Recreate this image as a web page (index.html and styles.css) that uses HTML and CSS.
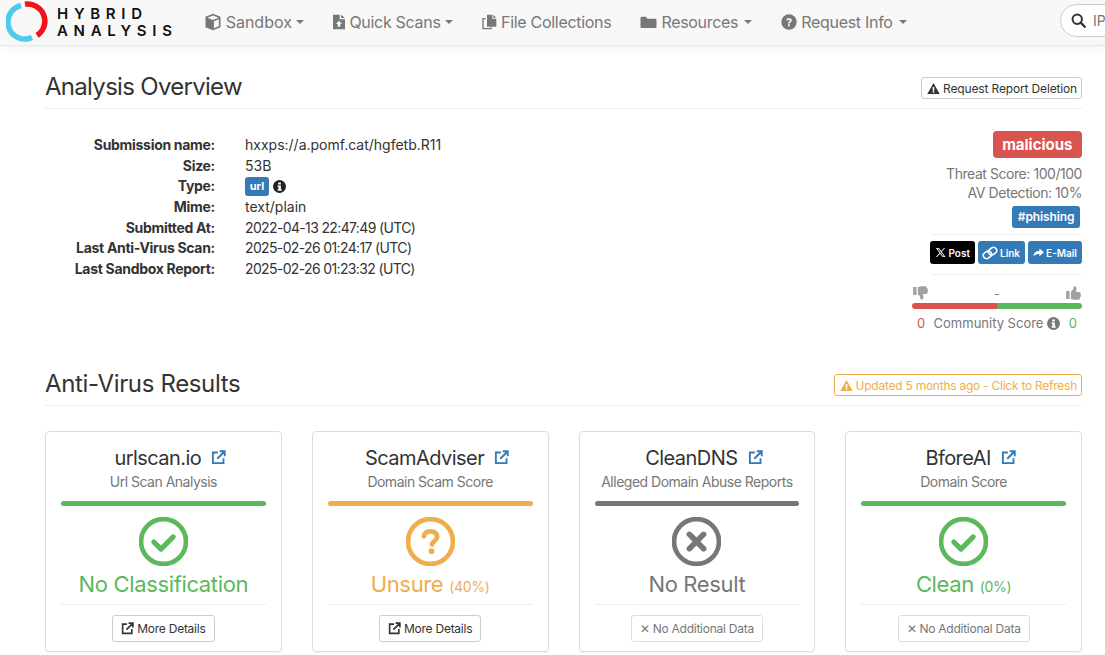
FILE: index.html
```html
<!DOCTYPE html>
<html lang="en">
<head>
    <meta charset="UTF-8">
    <meta name="viewport" content="width=device-width, initial-scale=1.0">
    <title>Analysis Overview</title>
    <link rel="stylesheet" href="styles.css">
</head>
<body>

    <nav class="navbar">
        <a class="brand" href="#">
            <svg class="brand-mark" viewBox="0 0 44 44">
                <path d="M15 5.500A17 17 0 1 0 26 37.500" fill="none" stroke="#4ccbea" stroke-width="5.500"/>
                <path d="M19 4.300A17 17 0 0 1 31 35.400" fill="none" stroke="#f01418" stroke-width="5.500"/>
            </svg>
            <span class="brand-text">HYBRID<br>ANALYSIS</span>
        </a>
        <ul class="nav-menu">
            <li class="nav-sandbox">
                <svg class="nav-icon nav-icon-box" viewBox="0 0 24 24"><path d="M12 1 22 5v14l-10 4-10-4V5zM4.600 6.200 12 9.200l7.400-3L12 3.400zM13.200 11v9.200l6.600-2.700V8.400z" fill-rule="evenodd"/></svg>
                Sandbox <i class="caret"></i>
            </li>
            <li class="nav-scans">
                <svg class="nav-icon nav-icon-file" viewBox="0 0 18 24"><path d="M0 1h10v7h8v15H0zM12 1l6 5h-6zM9 10l-4.500 5H7v4h4v-4h2.500z" fill-rule="evenodd"/></svg>
                Quick Scans <i class="caret"></i>
            </li>
            <li class="nav-files">
                <svg class="nav-icon" viewBox="0 0 24 24"><path d="M9 1h8v6h6v12H9zM18.500 1 23 5.500h-4.500zM2 6h5v2H4v13h10v-1h2v3H2z"/></svg>
                File Collections
            </li>
            <li class="nav-resources">
                <svg class="nav-icon nav-icon-wide" viewBox="0 0 24 24"><path d="M0 6a2 2 0 0 1 2-2h6l2.500 3H22a2 2 0 0 1 2 2v10a2 2 0 0 1-2 2H2a2 2 0 0 1-2-2z"/></svg>
                Resources <i class="caret caret-far"></i>
            </li>
            <li class="nav-info">
                <svg class="nav-icon" viewBox="0 0 24 24"><circle cx="12" cy="12" r="11.500"/><path d="M8 9.500C8.300 7 10 6 12.200 6c2.400 0 4 1.400 4 3.400 0 2.900-3 2.900-3 4.800h-2.700c0-3 3-3.300 3-4.700 0-.8-.6-1.200-1.400-1.200-.9 0-1.400.5-1.600 1.500zM10.500 15.500h2.700v2.700h-2.700z" fill="#f8f8f8"/></svg>
                Request Info <i class="caret caret-far"></i>
            </li>
        </ul>
        <div class="nav-search">
            <svg class="search-icon" viewBox="0 0 24 24"><circle cx="10" cy="10" r="7.500" fill="none" stroke="#333" stroke-width="3.200"/><path d="m15.500 15.500 6.500 6.500" stroke="#333" stroke-width="3.800" stroke-linecap="round"/></svg>
            <span>IP, Domain, Hash...</span>
        </div>
    </nav>

    <main class="container">
        <div class="page-header">
            <h2>Analysis Overview</h2>
            <a class="btn btn-default" href="#">
                <svg class="btn-icon" viewBox="0 0 24 24"><path d="M12 2 23.500 22H.5zM10.500 9v7h3V9zM10.500 17.200v2.600h3v-2.600z" fill-rule="evenodd"/></svg>
                Request Report Deletion
            </a>
        </div>

        <section class="overview">
            <dl class="details">
                <dt>Submission name:</dt><dd>hxxps://a.pomf.cat/hgfetb.R11</dd>
                <dt>Size:</dt><dd>53B</dd>
                <dt>Type:</dt>
                <dd><span class="label-url">url</span>
                    <svg class="type-info" viewBox="0 0 24 24"><circle cx="12" cy="12" r="12" fill="#222"/><path d="M9.500 4.500h5v3.600h-5zM8.500 10h6v7h1.500v3H8.500v-3H10v-4H8.500z" fill="#fff"/></svg>
                </dd>
                <dt>Mime:</dt><dd>text/plain</dd>
                <dt>Submitted At:</dt><dd class="date">2022-04-13 22:47:49 (UTC)</dd>
                <dt>Last Anti-Virus Scan:</dt><dd class="date">2025-02-26 01:24:17 (UTC)</dd>
                <dt>Last Sandbox Report:</dt><dd class="date">2025-02-26 01:23:32 (UTC)</dd>
            </dl>

            <aside class="verdict">
                <span class="verdict-badge">malicious</span>
                <div class="score-line">Threat Score: 100/100</div>
                <div class="score-line">AV Detection: 10%</div>
                <span class="tag">#phishing</span>
                <hr class="verdict-rule rule-top">
                <div class="share">
                    <a class="share-btn share-x" href="#">
                        <svg viewBox="0 0 24 24"><path d="M2 2h6.500l5 6.800L19.500 2H22l-7.400 8.400L23 22h-6.500l-5.500-7.400L4.500 22H2l7.900-9zM5.500 3.800 17.500 20.200h2L7.500 3.800z" fill-rule="evenodd"/></svg>
                        Post
                    </a>
                    <a class="share-btn" href="#">
                        <svg class="link-icon" viewBox="0 0 28 24"><g fill="none" stroke="#fff" stroke-width="2.800" transform="rotate(-35 14 12)"><rect x="1" y="6.500" width="15" height="11" rx="5.500"/><rect x="12" y="6.500" width="15" height="11" rx="5.500"/></g></svg>Link
                    </a>
                    <a class="share-btn" href="#">
                        <svg viewBox="0 0 24 24"><path d="M14 3l10 8.500L14 20v-5C8 15 4 16.500 1 21c0-7 4-12.500 13-13z"/></svg>
                        E-Mail
                    </a>
                </div>
                <hr class="verdict-rule rule-bottom">
                <div class="votes">
                    <svg class="thumb" viewBox="0 0 24 24"><path d="M1 3h5v12H1zM8 3.500C10 2.500 12 2 15 2h4c1.500 0 2.500 1 2.500 2.300 1 .7 1.500 2 1 3 .8.900.9 2.300.2 3.200.3 1.700-.7 3-2.700 3h-4.500c.5 2 1 3 1 4.500 0 2.500-1.500 4-3 4-1 0-1.500-.5-1.500-1.500 0-3-2-5-4-6.500z"/></svg>
                    <span class="vote-dash">-</span>
                    <svg class="thumb" viewBox="0 0 24 24"><path d="M1 9h5v12H1zM8 20.500c2 1 4 1.500 7 1.500h4c1.500 0 2.500-1 2.500-2.300 1-.7 1.500-2 1-3 .8-.9.9-2.300.2-3.200.3-1.700-.7-3-2.700-3h-4.500c.5-2 1-3 1-4.500 0-2.500-1.500-4-3-4-1 0-1.500.5-1.500 1.500 0 3-2 5-4 6.500z"/></svg>
                </div>
                <div class="vote-bar"><span class="vote-down"></span><span class="vote-up"></span></div>
                <div class="community">
                    <span class="count-bad">0</span>
                    <span class="community-label">Community Score
                        <svg class="community-info" viewBox="0 0 24 24"><circle cx="12" cy="12" r="12" fill="#777"/><path d="M9.500 4.500h5v3.600h-5zM8.500 10h6v7h1.500v3H8.500v-3H10v-4H8.500z" fill="#fff"/></svg>
                    </span>
                    <span class="count-good">0</span>
                </div>
            </aside>
        </section>

        <div class="page-header header-av">
            <h2>Anti-Virus Results</h2>
            <a class="btn btn-warning" href="#">
                <svg class="btn-icon" viewBox="0 0 24 24"><path d="M12 2 23.500 22H.5zM10.500 9v7h3V9zM10.500 17.200v2.600h3v-2.600z" fill-rule="evenodd"/></svg>
                Updated 5 months ago - Click to Refresh
            </a>
        </div>

        <section class="cards">
            <article class="card success">
                <h3>urlscan.io <svg class="ext" viewBox="0 0 24 24"><path d="M11 4H3v17h17v-8M14 2h8v8M22 2 10 14" fill="none" stroke="currentColor" stroke-width="3"/></svg></h3>
                <p class="card-sub">Url Scan Analysis</p>
                <div class="card-bar"></div>
                <svg class="status-icon" viewBox="0 0 48 48"><circle cx="24" cy="24" r="22" fill="none" stroke="currentColor" stroke-width="4.600"/><path d="m14.500 24.500 7 7 12-12" fill="none" stroke="currentColor" stroke-width="5" stroke-linecap="round" stroke-linejoin="round"/></svg>
                <div class="status">No Classification</div>
                <hr class="card-rule">
                <a class="btn btn-details" href="#">
                    <svg class="ext-small" viewBox="0 0 24 24"><path d="M11 4H3v17h17v-8M14 2h8v8M22 2 10 14" fill="none" stroke="currentColor" stroke-width="3"/></svg>
                    More Details
                </a>
            </article>

            <article class="card warning">
                <h3>ScamAdviser <svg class="ext" viewBox="0 0 24 24"><path d="M11 4H3v17h17v-8M14 2h8v8M22 2 10 14" fill="none" stroke="currentColor" stroke-width="3"/></svg></h3>
                <p class="card-sub">Domain Scam Score</p>
                <div class="card-bar"></div>
                <svg class="status-icon" viewBox="0 0 48 48"><circle cx="24" cy="24" r="22" fill="none" stroke="currentColor" stroke-width="4.600"/><path d="M17.500 19c.5-3.500 3.200-5 6.500-5 3.800 0 6.500 2 6.500 5.200 0 4.300-5 4.300-5 7.800" fill="none" stroke="currentColor" stroke-width="4.600" stroke-linecap="round"/><circle cx="25" cy="33.500" r="2.800" fill="currentColor"/></svg>
                <div class="status">Unsure <small>(40%)</small></div>
                <hr class="card-rule">
                <a class="btn btn-details" href="#">
                    <svg class="ext-small" viewBox="0 0 24 24"><path d="M11 4H3v17h17v-8M14 2h8v8M22 2 10 14" fill="none" stroke="currentColor" stroke-width="3"/></svg>
                    More Details
                </a>
            </article>

            <article class="card neutral">
                <h3>CleanDNS <svg class="ext" viewBox="0 0 24 24"><path d="M11 4H3v17h17v-8M14 2h8v8M22 2 10 14" fill="none" stroke="currentColor" stroke-width="3"/></svg></h3>
                <p class="card-sub">Alleged Domain Abuse Reports</p>
                <div class="card-bar"></div>
                <svg class="status-icon" viewBox="0 0 48 48"><circle cx="24" cy="24" r="22" fill="none" stroke="currentColor" stroke-width="4.600"/><path d="m17 17 14 14M31 17 17 31" fill="none" stroke="currentColor" stroke-width="5.500" stroke-linecap="round"/></svg>
                <div class="status">No Result</div>
                <hr class="card-rule">
                <a class="btn btn-nodata" href="#">&#10005; No Additional Data</a>
            </article>

            <article class="card success">
                <h3>BforeAI <svg class="ext" viewBox="0 0 24 24"><path d="M11 4H3v17h17v-8M14 2h8v8M22 2 10 14" fill="none" stroke="currentColor" stroke-width="3"/></svg></h3>
                <p class="card-sub">Domain Score</p>
                <div class="card-bar"></div>
                <svg class="status-icon" viewBox="0 0 48 48"><circle cx="24" cy="24" r="22" fill="none" stroke="currentColor" stroke-width="4.600"/><path d="m14.500 24.500 7 7 12-12" fill="none" stroke="currentColor" stroke-width="5" stroke-linecap="round" stroke-linejoin="round"/></svg>
                <div class="status">Clean <small>(0%)</small></div>
                <hr class="card-rule">
                <a class="btn btn-nodata" href="#">&#10005; No Additional Data</a>
            </article>
        </section>
    </main>

</body>
</html>
```

FILE: styles.css
```css
* {
    box-sizing: border-box;
}

html, body {
    height: 655px;
    overflow: hidden;
}

body {
    margin: 0;
    font-family: Inter, "Noto Sans", sans-serif;
    font-size: 14px;
    color: #333;
    background-color: #fff;
}

a {
    text-decoration: none;
}

/* navbar */
.navbar {
    display: flex;
    align-items: center;
    height: 46px;
    padding-bottom: 1px;
    background-color: #f8f8f8;
    border-bottom: 1px solid #e7e7e7;
    box-shadow: 0 3px 8px rgba(0, 0, 0, 0.05);
    overflow: hidden;
}

.brand {
    display: flex;
    align-items: center;
    gap: 7px;
    margin-left: 6px;
    color: #111;
}

.brand-mark {
    width: 44px;
    height: 44px;
}

.brand-text {
    font-size: 15px;
    font-weight: 600;
    line-height: 17px;
    letter-spacing: 5.7px;
}

.nav-menu {
    display: flex;
    align-items: center;
    list-style: none;
    margin: 0 0 0 26px;
    padding: 0;
    font-size: 16px;
    letter-spacing: -0.3px;
    color: #777;
}

.nav-menu li {
    display: flex;
    align-items: center;
    gap: 4px;
    margin-right: 29px;
    white-space: nowrap;
}

.nav-menu .nav-sandbox {
    letter-spacing: 0;
}

.nav-menu .nav-scans {
    gap: 4.5px;
    margin-right: 28px;
}

.nav-menu .nav-info {
    margin-right: 0;
}

.nav-icon {
    width: 16px;
    height: 16px;
    fill: #777;
}

.nav-icon-box {
    width: 18px;
    height: 18px;
}

.nav-icon-file {
    width: 12px;
}

.nav-icon-wide {
    width: 17px;
}

.caret {
    width: 0;
    height: 0;
    border-top: 4px solid #777;
    border-left: 4px solid transparent;
    border-right: 4px solid transparent;
}

.caret-far {
    margin-left: 2px;
}

.nav-search {
    display: flex;
    align-items: center;
    gap: 7px;
    flex: none;
    width: 200px;
    height: 33px;
    margin: 0 -155px 4px auto;
    padding-left: 10px;
    font-size: 14px;
    color: #777;
    background-color: #fff;
    border: 1px solid #ccc;
    border-radius: 17px;
    white-space: nowrap;
}

.search-icon {
    width: 15px;
    height: 15px;
}

/* page sections */
.container {
    padding: 0 23px 0 45px;
}

.page-header {
    display: flex;
    justify-content: space-between;
    align-items: center;
    height: 63px;
    padding-top: 19px;
    border-bottom: 1px solid #eee;
}

.page-header h2 {
    margin: 0;
    font-size: 24px;
    font-weight: 400;
    letter-spacing: -0.7px;
}

.header-av h2 {
    letter-spacing: -0.35px;
}

.btn {
    display: inline-flex;
    align-items: center;
    gap: 3px;
    font-size: 12px;
    letter-spacing: -0.15px;
    border-radius: 3px;
    white-space: nowrap;
}

.btn-default {
    height: 22px;
    margin-top: 3px;
    padding: 0 4px 0 5px;
    color: #333;
    border: 1px solid #ccc;
}

.btn-warning {
    height: 22px;
    margin-top: 3px;
    padding: 0 4px 0 5px;
    letter-spacing: -0.25px;
    color: #f0ad4e;
    border: 1px solid #f0ad4e;
}

.btn-icon {
    width: 13px;
    height: 13px;
    fill: currentColor;
}

/* overview */
.overview {
    display: flex;
    justify-content: space-between;
    height: 234px;
}

.details {
    display: grid;
    grid-template-columns: 170px auto;
    grid-auto-rows: 20.6px;
    column-gap: 30px;
    align-content: start;
    margin: 26.3px 0 0;
    line-height: 20.6px;
}

.details dt {
    font-weight: 700;
    text-align: right;
    letter-spacing: -0.3px;
}

.details dd {
    display: flex;
    align-items: center;
    gap: 4px;
    margin: 0;
}

.details .date {
    letter-spacing: -0.64px;
}

.label-url {
    width: 24px;
    font-size: 11px;
    font-weight: 700;
    line-height: 19px;
    text-align: center;
    color: #fff;
    background-color: #337ab7;
    border-radius: 3px;
}

.type-info {
    width: 13px;
    height: 13px;
}

.verdict {
    display: flex;
    flex-direction: column;
    align-items: flex-end;
    width: 170px;
    padding-top: 22px;
}

.verdict-badge {
    padding: 0 9.5px;
    font-size: 15px;
    font-weight: 700;
    line-height: 27px;
    color: #fff;
    background-color: #d9534f;
    border-radius: 4px;
}

.score-line {
    font-size: 14px;
    letter-spacing: -0.45px;
    line-height: 19px;
    color: #777;
}

.verdict-badge + .score-line {
    margin-top: 6px;
}

.tag {
    margin: 4px 2px 0 0;
    padding: 0 5.5px;
    font-size: 12px;
    font-weight: 600;
    letter-spacing: -0.1px;
    line-height: 22px;
    color: #fff;
    background-color: #337ab7;
    border-radius: 3px;
}

.verdict-rule {
    width: 150px;
    margin: 0 0 0 auto;
    border: 0;
    border-top: 1px solid #eee;
}

.rule-top {
    margin-top: 6px;
}

.rule-bottom {
    margin-top: 10px;
}

.share {
    display: flex;
    gap: 3px;
    margin-top: 6px;
}

.share-btn {
    display: flex;
    align-items: center;
    gap: 2px;
    height: 23px;
    padding: 0 5px;
    font-size: 10px;
    font-weight: 600;
    color: #fff;
    background-color: #337ab7;
    border-radius: 3px;
}

.share-btn svg {
    width: 11px;
    height: 11px;
    fill: #fff;
}

.share-btn .link-icon {
    width: 16px;
    height: 14px;
    margin-left: -1px;
}

.share-x {
    background-color: #000;
}

.votes {
    display: flex;
    justify-content: space-between;
    align-items: center;
    width: 100%;
    height: 18px;
    margin-top: 9px;
    font-size: 12px;
    color: #777;
}

.thumb {
    width: 17px;
    height: 16px;
    fill: #a0a0a0;
}

.vote-bar {
    display: flex;
    width: 100%;
    height: 6px;
    margin-top: 1px;
    border-radius: 3px;
    overflow: hidden;
}

.vote-down {
    flex: 1;
    background-color: #d9534f;
}

.vote-up {
    flex: 1;
    background-color: #5cb85c;
}

.community {
    display: flex;
    justify-content: space-between;
    width: 100%;
    padding: 0 5px;
    margin-top: 5px;
    font-size: 13px;
    line-height: 18px;
}

.community-label {
    display: flex;
    align-items: center;
    gap: 4px;
    color: #777;
}

.community-info {
    width: 13px;
    height: 13px;
}

.count-bad {
    color: #d9534f;
}

.count-good {
    color: #5cb85c;
}

/* result cards */
.cards {
    display: grid;
    grid-template-columns: repeat(4, 1fr);
    column-gap: 30px;
    margin-top: 25px;
}

.card {
    display: flex;
    flex-direction: column;
    align-items: center;
    height: 221px;
    padding: 14px 15px 0;
    border: 1px solid #ddd;
    border-radius: 4px;
    box-shadow: 0 1px 1px rgba(0, 0, 0, 0.05);
}

.success {
    --state: #5cb85c;
}

.warning {
    --state: #f0ad4e;
}

.neutral {
    --state: #777;
}

.card h3 {
    margin: 0;
    padding-left: 14px;
    font-size: 20px;
    font-weight: 400;
    letter-spacing: -0.55px;
    line-height: 24px;
    white-space: nowrap;
}

.ext {
    width: 15px;
    height: 15px;
    margin-left: 5px;
    color: #337ab7;
}

.ext-small {
    width: 13px;
    height: 13px;
}

.card-sub {
    margin: 2px 0 0;
    font-size: 14px;
    letter-spacing: -0.5px;
    line-height: 20px;
    white-space: nowrap;
    color: #777;
}

.card-bar {
    width: 100%;
    height: 5px;
    margin-top: 9px;
    border-radius: 3px;
    background-color: var(--state);
}

.status-icon {
    width: 49px;
    height: 49px;
    margin-top: 11px;
    color: var(--state);
}

.status {
    height: 27px;
    margin-top: 5px;
    font-size: 22px;
    letter-spacing: -0.35px;
    line-height: 27px;
    white-space: nowrap;
    color: var(--state);
}

.status small {
    font-size: 14px;
    letter-spacing: -0.3px;
}

.card-rule {
    width: 100%;
    margin: 6px 0 0;
    border: 0;
    border-top: 1px solid #eee;
}

.btn-details,
.btn-nodata {
    height: 27px;
    margin-top: 10px;
    padding: 0 8px;
    letter-spacing: -0.25px;
    border: 1px solid #ccc;
}

.btn-details {
    color: #333;
}

.btn-nodata {
    color: #777;
    border-color: #ddd;
}
```
